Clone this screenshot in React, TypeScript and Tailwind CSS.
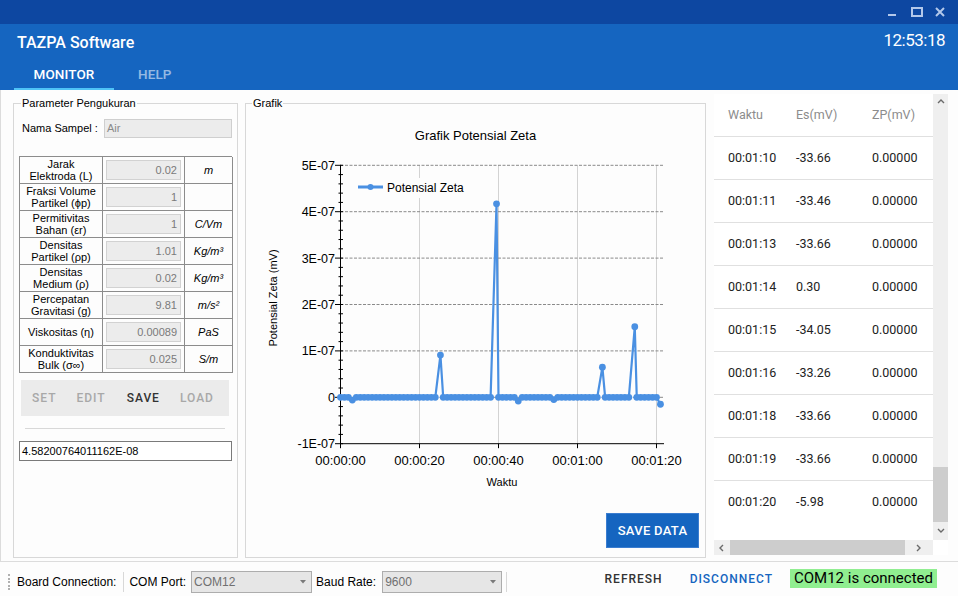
import React from "react";

const sans = { fontFamily: '"Liberation Sans", Arial, sans-serif' };
const roboto = { fontFamily: 'Roboto, "Liberation Sans", sans-serif' };

type Param = { l1: string; l2?: string; v: string; u: string };
const params: Param[] = [
  { l1: "Jarak", l2: "Elektroda (L)", v: "0.02", u: "m" },
  { l1: "Fraksi Volume", l2: "Partikel (ϕp)", v: "1", u: "" },
  { l1: "Permitivitas", l2: "Bahan (εr)", v: "1", u: "C/Vm" },
  { l1: "Densitas", l2: "Partikel (ρp)", v: "1.01", u: "Kg/m³" },
  { l1: "Densitas", l2: "Medium (ρ)", v: "0.02", u: "Kg/m³" },
  { l1: "Percepatan", l2: "Gravitasi (g)", v: "9.81", u: "m/s²" },
  { l1: "Viskositas (η)", v: "0.00089", u: "PaS" },
  { l1: "Konduktivitas", l2: "Bulk (σ∞)", v: "0.025", u: "S/m" },
];

const rows = [
  ["00:01:10", "-33.66"],
  ["00:01:11", "-33.46"],
  ["00:01:13", "-33.66"],
  ["00:01:14", "0.30"],
  ["00:01:15", "-34.05"],
  ["00:01:16", "-33.26"],
  ["00:01:18", "-33.66"],
  ["00:01:19", "-33.66"],
  ["00:01:20", "-5.98"],
];

// chart mapping (page coordinates, svg uses a matching viewBox)
const X0 = 340.5;
const XS = 3.95;
const Y0 = 397.3;
const YS = 46.4;
const px = (t: number) => X0 + t * XS;
const py = (v: number) => Y0 - v * YS;

const buildData = () => {
  const dips: Record<number, number> = { 3: -0.06, 45: -0.08, 54: -0.05, 81: -0.15 };
  const spikes: Record<number, [number, number]> = {
    25: [25.3, 0.91],
    39: [39.5, 4.17],
    66: [66.3, 0.65],
    74: [74.5, 1.52],
  };
  const out: [number, number][] = [];
  for (let k = 0; k <= 81; k++) {
    if (spikes[k]) out.push(spikes[k]);
    else out.push([k, dips[k] ?? 0]);
  }
  return out;
};
const data = buildData();

const Chart = () => {
  const yTicks = [5, 4, 3, 2, 1, 0, -1];
  const yLabels = ["5E-07", "4E-07", "3E-07", "2E-07", "1E-07", "0", "-1E-07"];
  const xTicks = [0, 20, 40, 60, 80];
  const xLabels = ["00:00:00", "00:00:20", "00:00:40", "00:01:00", "00:01:20"];
  const minor: number[] = [];
  for (let i = 0; i <= 30; i++) minor.push(py(5) + i * (YS / 5));
  const right = 664;
  const top = py(5);
  const bottom = py(-1);
  return (
    <svg width={459} height={400} viewBox="246 110 459 400" className="block" style={sans}>
      <text x={475.5} y={140} fontSize={13} textAnchor="middle" fill="#000">
        Grafik Potensial Zeta
      </text>
      {xTicks.slice(1).map((t) => (
        <line key={t} x1={px(t)} x2={px(t)} y1={top} y2={bottom} stroke="#d3d3d3" strokeWidth={1} />
      ))}
      {yTicks.slice(0, 6).map((v) => (
        <line key={v} x1={X0} x2={right} y1={py(v)} y2={py(v)} stroke="#8a8a8a" strokeWidth={1} strokeDasharray="3 1.5" />
      ))}
      {/* legend */}
      <rect x={352} y={178} width={118} height={20} fill="#fdfdfd" />
      <line x1={358} x2={383} y1={187} y2={187} stroke="#4a90e2" strokeWidth={3} />
      <circle cx={370.5} cy={187} r={3} fill="#4a90e2" />
      <text x={387} y={191.5} fontSize={12} fill="#000">
        Potensial Zeta
      </text>
      {/* axes */}
      <line x1={X0} x2={X0} y1={top - 0.5} y2={bottom + 0.5} stroke="#000" strokeWidth={1} />
      <line x1={X0} x2={right} y1={bottom} y2={bottom} stroke="#000" strokeWidth={1} />
      {minor.map((y, i) => (
        <line key={i} x1={i % 5 === 0 ? 335 : 338.5} x2={343} y1={y} y2={y} stroke="#000" strokeWidth={1} />
      ))}
      {xTicks.map((t) => (
        <line key={t} x1={px(t)} x2={px(t)} y1={bottom} y2={bottom + 4.5} stroke="#000" strokeWidth={1} />
      ))}
      {yTicks.map((v, i) => (
        <text key={v} x={335} y={py(v) + 4.5} fontSize={12.5} textAnchor="end" fill="#000">
          {yLabels[i]}
        </text>
      ))}
      {xTicks.map((t, i) => (
        <text key={t} x={px(t)} y={464.5} fontSize={13} textAnchor="middle" fill="#000">
          {xLabels[i]}
        </text>
      ))}
      <text x={502} y={486} fontSize={11} textAnchor="middle" fill="#000">
        Waktu
      </text>
      <text x={277} y={298} fontSize={11} textAnchor="middle" fill="#000" transform="rotate(-90 277 298)">
        Potensial Zeta (mV)
      </text>
      {/* series */}
      <polyline
        points={data.map(([t, v]) => `${px(t)},${py(v)}`).join(" ")}
        fill="none"
        stroke="#4a90e2"
        strokeWidth={2.2}
        strokeLinejoin="round"
      />
      {data.map(([t, v], i) => (
        <circle key={i} cx={px(t)} cy={py(v)} r={3.4} fill="#4a90e2" />
      ))}
    </svg>
  );
};

const Chevron = ({ dir }: { dir: "up" | "down" | "left" | "right" }) => {
  const pts = {
    up: "1,5 4,2 7,5",
    down: "1,2 4,5 7,2",
    left: "5,1 2,4 5,7",
    right: "2,1 5,4 2,7",
  }[dir];
  return (
    <svg width={8} height={8} viewBox="0 0 8 8">
      <polyline points={pts} fill="none" stroke="#6a6a6a" strokeWidth={1.4} />
    </svg>
  );
};

const Combo = ({ value, w }: { value: string; w: string }) => (
  <div className={`${w} h-[22px] flex items-center justify-between border border-[#adadad] bg-[#e6e6e6] pl-[2px] pr-[5px]`}>
    <span className="text-[12px] text-[#707070]" style={sans}>
      {value}
    </span>
    <svg width={6} height={4} viewBox="0 0 6 4">
      <polygon points="0,0 6,0 3,3.5" fill="#7a7a7a" />
    </svg>
  </div>
);

const App = () => {
  return (
    <div className="w-[958px] h-[596px] flex flex-col overflow-hidden bg-[#fdfdfd]">
      {/* title bar */}
      <div className="h-[24px] bg-[#0d47a1] flex items-center justify-end pr-[12px]">
        <svg width={60} height={24} viewBox="0 0 60 24">
          <rect x={2} y={14} width={8} height={2} fill="#b3c8ea" />
          <rect x={26} y={8} width={10} height={8} fill="none" stroke="#b3c8ea" strokeWidth={2} />
          <path d="M50 8 L58 16 M58 8 L50 16" stroke="#b3c8ea" strokeWidth={2} />
        </svg>
      </div>

      {/* header */}
      <div className="h-[66px] bg-[#1565c0] flex flex-col" style={roboto}>
        <div className="flex items-start justify-between h-[42px]">
          <div className="ml-[17px] mt-[8px] text-[16px] font-medium text-white leading-[22px]">TAZPA Software</div>
          <div className="mr-[13px] mt-[4px] text-[17px] tracking-[-0.5px] text-white leading-[24px]">12:53:18</div>
        </div>
        <div className="flex h-[24px] ml-[14px] text-[13.5px] font-medium tracking-[0.1px]">
          <div className="w-[100px] flex flex-col items-center justify-between">
            <span className="text-white leading-[18px] mt-[-1px]">MONITOR</span>
            <div className="w-full h-[2px] bg-[#4fc3f7]" />
          </div>
          <div className="ml-[24px] text-white/55 leading-[18px] mt-[-1px]">HELP</div>
        </div>
      </div>

      {/* body */}
      <div className="h-[472px] flex items-start border-l border-b border-[#dcdcdc]">
        {/* parameter group */}
        <fieldset className="ml-[12px] mt-[7px] w-[225px] h-[461px] border border-[#d8d8d8] pl-[5px]" style={sans}>
          <legend className="ml-[2px] px-[1px] text-[11px] leading-[13px] text-black">Parameter Pengukuran</legend>
          <div className="mt-[9px] flex items-center h-[19px]">
            <span className="ml-[3px] w-[82px] text-[11px] text-black">Nama Sampel :</span>
            <div className="w-[128px] h-[19px] border border-[#cfcfcf] bg-[#ececec] text-[11px] text-[#8a8a8a] pl-[2px] leading-[17px]">
              Air
            </div>
          </div>
          <div className="mt-[18px] w-[213px] border-l border-t border-[#8c8c8c] grid grid-cols-[83px_82px_48px]">
            {params.map((p, i) => (
              <React.Fragment key={i}>
                <div className="h-[27px] border-r border-b border-[#8c8c8c] flex flex-col items-center justify-center text-[11px] leading-[12.5px] text-black text-center">
                  <span>{p.l1}</span>
                  {p.l2 && <span>{p.l2}</span>}
                </div>
                <div className="h-[27px] border-r border-b border-[#8c8c8c] flex items-center justify-center">
                  <div className="w-[75px] h-[20px] border border-[#d2d2d2] bg-[#ececec] text-right pr-[3px] text-[11px] leading-[18px] text-[#7a7a7a]">
                    {p.v}
                  </div>
                </div>
                <div className="h-[27px] border-r border-b border-[#8c8c8c] flex items-center justify-center text-[11px] italic text-black">
                  {p.u}
                </div>
              </React.Fragment>
            ))}
          </div>
          <div
            className="mt-[7px] ml-[2px] w-[208px] h-[36px] bg-[#ebebeb] flex items-center text-[12px] font-medium tracking-[1px]"
            style={roboto}
          >
            <span className="ml-[11px] text-[#a8a8a8]">SET</span>
            <span className="ml-[20px] text-[#a8a8a8]">EDIT</span>
            <span className="ml-[21px] text-[#333333]">SAVE</span>
            <span className="ml-[20px] text-[#a8a8a8]">LOAD</span>
          </div>
          <div className="mt-[12px] ml-[6px] w-[200px] h-[1px] bg-[#d8d8d8]" />
          <div className="mt-[12px] w-[213px] h-[20px] border border-[#7a7a7a] bg-white text-[11px] leading-[18px] text-black pl-[2px]">
            4.58200764011162E-08
          </div>
        </fieldset>

        {/* chart group */}
        <fieldset className="ml-[7px] mt-[7px] w-[461px] h-[461px] border border-[#d8d8d8] flex flex-col" style={sans}>
          <legend className="ml-[6px] px-[1px] text-[11px] leading-[13px] text-black">Grafik</legend>
          <Chart />
          <div className="flex justify-end mt-[3px] mr-[6px]">
            <button
              className="w-[93px] h-[35px] bg-[#1565c0] border border-[#3b7dd0] text-white text-[13px] font-medium tracking-[0.3px]"
              style={roboto}
            >
              SAVE DATA
            </button>
          </div>
        </fieldset>

        {/* data table */}
        <div className="ml-[8px] mt-[4px] w-[234px] h-[461px] flex flex-col bg-white" style={roboto}>
          <div className="flex h-[446px]">
            <div className="w-[219px] overflow-hidden text-[12.5px]">
              <div className="h-[43px] border-b border-[#e0e0e0] flex items-center text-[#8c8c8c]">
                <span className="ml-[14px] w-[68px]">Waktu</span>
                <span className="w-[76px]">Es(mV)</span>
                <span>ZP(mV)</span>
              </div>
              {rows.map((r, i) => (
                <div
                  key={i}
                  className={`h-[43px] flex items-center text-[#222222] ${i < rows.length - 1 ? "border-b border-[#e0e0e0]" : ""}`}
                >
                  <span className="ml-[14px] w-[68px]">{r[0]}</span>
                  <span className="w-[76px]">{r[1]}</span>
                  <span>0.00000</span>
                </div>
              ))}
            </div>
            <div className="w-[15px] h-full bg-[#efefef] flex flex-col items-center">
              <div className="h-[15px] flex items-center justify-center">
                <Chevron dir="up" />
              </div>
              <div className="flex-1" />
              <div className="w-full h-[55px] bg-[#cdcdcd]" />
              <div className="h-[18px] flex items-center justify-center">
                <Chevron dir="down" />
              </div>
            </div>
          </div>
          <div className="flex h-[15px]">
            <div className="w-[219px] h-full bg-[#efefef] flex items-center">
              <div className="w-[16px] flex justify-center">
                <Chevron dir="left" />
              </div>
              <div className="w-[175px] h-full bg-[#cdcdcd]" />
              <div className="flex-1 flex justify-center">
                <Chevron dir="right" />
              </div>
            </div>
            <div className="w-[15px] h-full bg-white" />
          </div>
        </div>
      </div>

      {/* status bar */}
      <div className="h-[34px] flex items-start bg-[#fdfdfd]" style={sans}>
        <div className="flex items-center mt-[8px] h-[24px] text-[12px] text-black">
          <div className="ml-[8px] h-[18px] w-[2px] flex flex-col justify-between py-[1px]">
            {[0, 1, 2, 3, 4].map((i) => (
              <div key={i} className="w-[2px] h-[2px] bg-[#b0b0b0]" />
            ))}
          </div>
          <span className="ml-[7px]">Board Connection:</span>
          <div className="ml-[7px] w-[1px] h-[20px] bg-[#d8d8d8]" />
          <span className="ml-[5px]">COM Port:</span>
          <div className="ml-[5px]">
            <Combo value="COM12" w="w-[121px]" />
          </div>
          <span className="ml-[4px]">Baud Rate:</span>
          <div className="ml-[6px]">
            <Combo value="9600" w="w-[120px]" />
          </div>
          <div className="ml-[4px] w-[1px] h-[20px] bg-[#d8d8d8]" />
        </div>
        <div className="ml-auto mr-[21px] mt-[7px] flex items-center h-[19px]" style={roboto}>
          <span className="text-[12px] font-medium tracking-[1px] text-[#333333]">REFRESH</span>
          <span className="ml-[27px] text-[12px] font-medium tracking-[1px] text-[#1565c0]">DISCONNECT</span>
          <span className="ml-[17px] h-[19px] bg-[#90ee90] px-[4px] text-[15px] leading-[19px] text-black">
            COM12 is connected
          </span>
        </div>
      </div>
    </div>
  );
};

export default App;
